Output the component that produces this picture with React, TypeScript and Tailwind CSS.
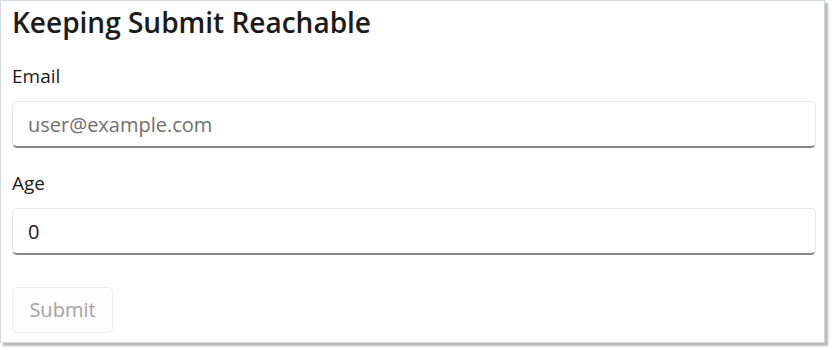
export default function App() {
  return (
    <div className="h-[350px] w-[833px] bg-white" style={{ fontFamily: '"Open Sans", "Noto Sans", sans-serif' }}>
      <div className="h-[343px] w-[825px] border border-[#d4d7df] bg-white pl-[11px] pr-[8px] shadow-[3px_3px_2px_rgba(0,0,0,0.28)]">
        <h1 className="pt-[3px] text-[28px] font-semibold leading-[36px] text-[#1b1b1b]">Keeping Submit Reachable</h1>

        <label className="mt-[23px] block text-[19px] leading-[26px] text-[#1b1b1b]">Email</label>
        <input
          type="text"
          placeholder="user@example.com"
          className="mt-[12px] block h-[47px] w-full rounded-[5px] border border-[#e7e7e7] border-b-[2px] border-b-[#868686] bg-white px-[15px] text-[20px] text-[#1b1b1b] outline-none placeholder:text-[#707070]"
        />

        <label className="mt-[22px] block text-[19px] leading-[26px] text-[#1b1b1b]">Age</label>
        <input
          type="text"
          defaultValue="0"
          className="mt-[12px] block h-[47px] w-full rounded-[5px] border border-[#e7e7e7] border-b-[2px] border-b-[#868686] bg-white px-[15px] text-[20px] text-[#1b1b1b] outline-none"
        />

        <button
          disabled
          className="mt-[32px] block h-[46px] w-[101px] rounded-[5px] border border-[#efefef] bg-[#fdfdfd] text-[20px] text-[#a3a3a3]"
        >
          Submit
        </button>
      </div>
    </div>
  );
}
